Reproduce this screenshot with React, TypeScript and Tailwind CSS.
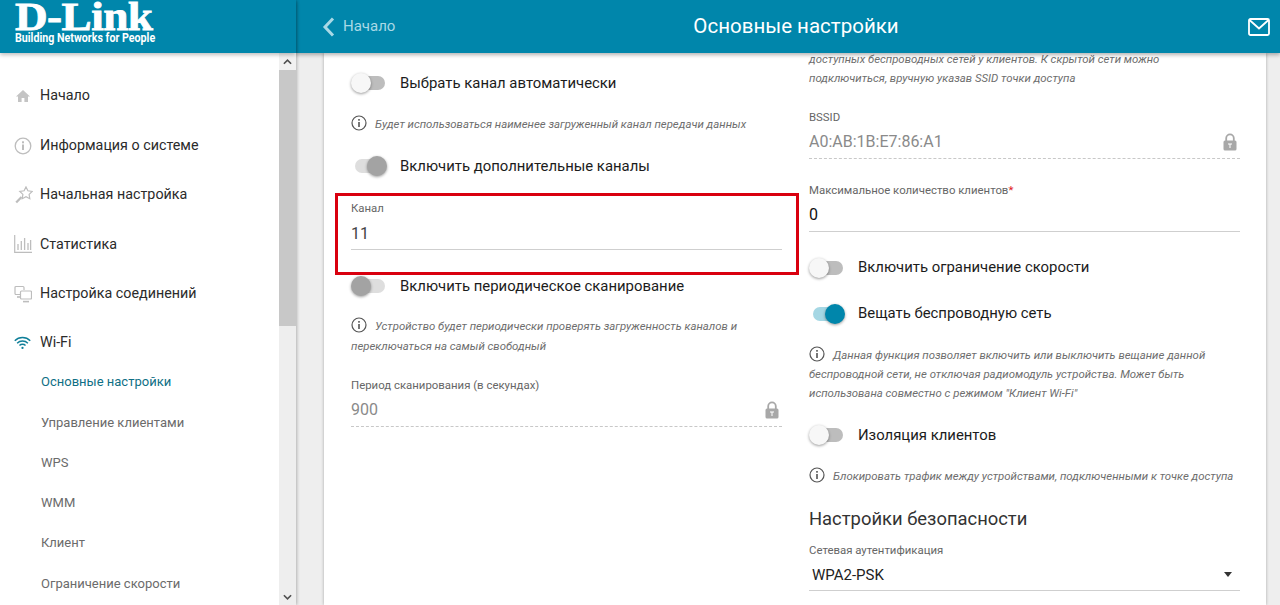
import React from "react";

const Sans = "font-['Roboto',_'Noto_Sans',_sans-serif]";

function Toggle({ state }: { state: "off" | "grayOn" | "grayOff" | "on" }) {
  const track =
    state === "off" ? "bg-[#bdbdbd]" : state === "on" ? "bg-[#a5d7e4]" : "bg-[#dedede]";
  const knob =
    state === "off"
      ? "bg-[#f7f7f7] left-0"
      : state === "on"
        ? "bg-[#0086ab] left-[16px]"
        : state === "grayOn"
          ? "bg-[#a3a3a3] left-[16px]"
          : "bg-[#a3a3a3] left-0";
  return (
    <span className="relative block w-[36px] h-[20px] shrink-0">
      <span className={`absolute left-[4px] top-[3px] w-[30px] h-[14px] rounded-full ${track}`} />
      <span
        className={`absolute top-0 w-[20px] h-[20px] rounded-full shadow-[0_1px_3px_rgba(0,0,0,0.4)] ${knob}`}
      />
    </span>
  );
}

function ToggleRow({ state, label, className = "" }: { state: any; label: string; className?: string }) {
  return (
    <div className={`flex items-center gap-[13px] h-[20px] ${className}`}>
      <Toggle state={state} />
      <span className="text-[14.9px] text-[#1c1c1c] whitespace-nowrap">{label}</span>
    </div>
  );
}

function InfoIcon({ className = "" }: { className?: string }) {
  return (
    <svg viewBox="0 0 16 16" className={`inline-block w-[16px] h-[16px] ${className}`} fill="none">
      <circle cx="8" cy="8" r="7" stroke="#555" strokeWidth="1.2" />
      <rect x="7.2" y="7" width="1.6" height="5" fill="#555" />
      <rect x="7.2" y="4" width="1.6" height="1.7" fill="#555" />
    </svg>
  );
}

function Hint({ children, className = "" }: { children: React.ReactNode; className?: string }) {
  return (
    <p className={`text-[11.4px] leading-[19.3px] italic text-[#6e6e6e] ${className}`}>
      <InfoIcon className="align-[-3px] mr-[8px]" />
      {children}
    </p>
  );
}

function Lock() {
  return (
    <svg viewBox="0 0 14 18" className="w-[14px] h-[18px]">
      <path d="M3.2 8V5.2a3.8 3.8 0 0 1 7.6 0V8" fill="none" stroke="#a8a8a8" strokeWidth="1.8" />
      <rect x="0.5" y="7.5" width="13" height="10" rx="1.5" fill="#a8a8a8" />
      <path d="M5 10.5h4v1H7.5v3.5h-1v-3.5H5z" fill="#fff" />
    </svg>
  );
}

function Field({
  label,
  value,
  star,
  locked,
  valueClass = "text-[#222]",
  line = "border-b border-[#cfcfcf]",
}: {
  label: string;
  value: string;
  star?: boolean;
  locked?: boolean;
  valueClass?: string;
  line?: string;
}) {
  return (
    <div>
      <div className="text-[11.4px] leading-[16px] text-[#666]">
        {label}
        {star && <span className="text-[#e0201a]">*</span>}
      </div>
      <div className={`flex items-center justify-between h-[34px] pt-[2px] pr-[3px] ${line}`}>
        <span className={`text-[16px] ${valueClass}`}>{value}</span>
        {locked && <Lock />}
      </div>
    </div>
  );
}

const stroke = "#bdbdbd";
const icons: Record<string, React.ReactNode> = {
  home: (
    <svg viewBox="0 0 16 16" className="w-[16px] h-[16px] ml-[1px]">
      <path d="M8 2 1 8.5h2V14h3.6v-4h2.8v4H13V8.5h2z" fill="#c4c4c4" />
    </svg>
  ),
  info: (
    <svg viewBox="0 0 18 18" className="w-[18px] h-[18px]" fill="none">
      <circle cx="9" cy="9" r="7.8" stroke={stroke} strokeWidth="1.3" />
      <rect x="8" y="7.5" width="2" height="5.5" fill={stroke} />
      <rect x="8" y="4.3" width="2" height="2" fill={stroke} />
    </svg>
  ),
  wizard: (
    <svg viewBox="0 0 18 18" className="w-[18px] h-[18px] ml-[1px]" fill="none" stroke={stroke} strokeWidth="1.2">
      <path d="M11 .9l1.9 3.9 4.3.6-3.1 3 .7 4.3-3.8-2-3.8 2 .7-4.3-3.1-3 4.3-.6z" />
      <path d="M6.5 11 1.2 16.6" strokeWidth="2.2" />
    </svg>
  ),
  stats: (
    <svg viewBox="0 0 18 18" className="w-[18px] h-[18px]" fill="none" stroke={stroke}>
      <path d="M.7 0v17.3H18" strokeWidth="1.2" />
      <path d="M4 15V9M7.3 15V6M10.6 15V3M14 15V8M16.6 15V5" strokeWidth="1.3" />
    </svg>
  ),
  conn: (
    <svg viewBox="0 0 18 18" className="w-[18px] h-[18px]" fill="none" stroke={stroke} strokeWidth="1.2">
      <path d="M6 9.5H2a1 1 0 0 1-1-1V2.5a1 1 0 0 1 1-1h7a1 1 0 0 1 1 1V5" />
      <rect x="6.5" y="6" width="11" height="8" rx="1" />
      <path d="M9 16.6h6" strokeWidth="1.6" />
      <path d="M3 12h3" strokeWidth="1.6" />
    </svg>
  ),
  wifi: (
    <svg viewBox="0 0 18 14" className="w-[17px] h-[14px]" fill="none" stroke="#0f7f99" strokeWidth="1.5">
      <path d="M.8 4.6a11.6 11.6 0 0 1 16.4 0" />
      <path d="M3.3 7.2a8 8 0 0 1 11.4 0" />
      <path d="M5.8 9.6a4.5 4.5 0 0 1 6.4 0" />
      <circle cx="9" cy="12.2" r="1.2" fill="#0f7f99" stroke="none" />
    </svg>
  ),
};

function MainItem({ icon, label }: { icon: string; label: string }) {
  return (
    <div className="flex items-center h-[49.4px] pl-[14px]">
      <span className="w-[26px] flex justify-start items-center">{icons[icon]}</span>
      <span className="text-[14.3px] text-[#2b2b2b] whitespace-nowrap">{label}</span>
    </div>
  );
}

function SubItem({ label, active }: { label: string; active?: boolean }) {
  return (
    <div className={`h-[40.3px] flex items-center pl-[41px] text-[13px] whitespace-nowrap ${active ? "text-[#0f6f85]" : "text-[#6b6b6b]"}`}>
      {label}
    </div>
  );
}

export default function App() {
  return (
    <div className={`relative flex w-[1280px] h-[605px] overflow-hidden bg-[#eeeeee] ${Sans}`}>
      {/* left column */}
      <aside className="relative z-20 w-[296px] shrink-0 flex flex-col bg-white shadow-[1px_0_3px_rgba(0,0,0,0.25)]">
        <div className="relative z-10 h-[53px] bg-[#0086ab] shadow-[0_2px_4px_rgba(0,0,0,0.25)] pl-[15px] text-white">
          <div className="font-['Liberation_Serif',_serif] font-bold text-[40px] h-[32px] leading-[33px] tracking-[-0.5px] origin-left scale-x-[1.13] whitespace-nowrap [-webkit-text-stroke:0.8px_white]">
            D-Link
          </div>
          <div className="font-['Roboto',_sans-serif] font-bold text-[12px] h-[13px] leading-[13px] origin-left scale-x-[0.89] whitespace-nowrap">
            Building Networks for People
          </div>
        </div>
        <div className="flex-1 flex min-h-0">
          <nav className="flex-1 pt-[18.5px] overflow-hidden">
            <MainItem icon="home" label="Начало" />
            <MainItem icon="info" label="Информация о системе" />
            <MainItem icon="wizard" label="Начальная настройка" />
            <MainItem icon="stats" label="Статистика" />
            <MainItem icon="conn" label="Настройка соединений" />
            <MainItem icon="wifi" label="Wi-Fi" />
            <div className="-mt-[6px]">
              <SubItem label="Основные настройки" active />
              <SubItem label="Управление клиентами" />
              <SubItem label="WPS" />
              <SubItem label="WMM" />
              <SubItem label="Клиент" />
              <SubItem label="Ограничение скорости" />
            </div>
          </nav>
          <div className="w-[17px] shrink-0 bg-[#eeeeee] flex flex-col">
            <div className="h-[17px] flex items-center justify-center bg-[#f1f1f1]">
              <svg viewBox="0 0 10 6" className="w-[9px] h-[6px]" fill="none" stroke="#505050" strokeWidth="1.8">
                <path d="M1 5l4-4 4 4" />
              </svg>
            </div>
            <div className="h-[256px] bg-[#c8c8c8]" />
            <div className="flex-1" />
            <div className="h-[17px] flex items-center justify-center">
              <svg viewBox="0 0 10 6" className="w-[9px] h-[6px]" fill="none" stroke="#505050" strokeWidth="1.8">
                <path d="M1 1l4 4 4-4" />
              </svg>
            </div>
          </div>
        </div>
      </aside>

      {/* right column */}
      <div className="flex-1 min-w-0 flex flex-col">
        <header className="relative z-10 h-[53px] shrink-0 bg-[#0086ab] shadow-[0_2px_4px_rgba(0,0,0,0.3)] grid grid-cols-[1fr_auto_1fr] items-center pl-[26px] pr-[10px]">
          <div className="flex items-center gap-[8px] text-[#a9d9e6]">
            <svg viewBox="0 0 12 20" className="w-[13px] h-[20px]" fill="none" stroke="#a9d9e6" strokeWidth="3">
              <path d="M10.5 1.5 2.5 10l8 8.5" />
            </svg>
            <span className="text-[15px]">Начало</span>
          </div>
          <h1 className="text-[20.5px] text-white font-normal">Основные настройки</h1>
          <svg viewBox="0 0 22 18" className="w-[22px] h-[18px] justify-self-end" fill="none" stroke="#fff" strokeWidth="1.8">
            <rect x="1" y="1" width="20" height="16" rx="1.5" />
            <path d="M1.5 2 11 10.5 20.5 2" />
          </svg>
        </header>
        <main className="flex-1 min-h-0 overflow-hidden pl-[28px] pr-[14px]">
          <div className="h-full bg-white shadow-[0_0_3px_rgba(0,0,0,0.3)] flex gap-[27px] px-[27px] overflow-hidden">
            <section className="w-[431px] shrink-0 pt-[20px]">
              <ToggleRow state="off" label="Выбрать канал автоматически" />
              <Hint className="mt-[22px]">Будет использоваться наименее загруженный канал передачи данных</Hint>
              <ToggleRow state="grayOn" label="Включить дополнительные каналы" className="mt-[22px]" />
              <div className="mt-[24px]">
                <Field label="Канал" value="11" valueClass="text-[#444]" />
              </div>
              <ToggleRow state="grayOff" label="Включить периодическое сканирование" className="mt-[26px]" />
              <Hint className="mt-[21px]">
                Устройство будет периодически проверять загруженность каналов и переключаться на самый свободный
              </Hint>
              <div className="mt-[21px]">
                <Field label="Период сканирования (в секундах)" value="900" locked valueClass="text-[#8a8a8a]" line="border-b border-dashed border-[#c8c8c8]" />
              </div>
            </section>
            <section className="w-[431px] shrink-0 -mt-[3px]">
              <p className="text-[11.4px] leading-[19.3px] italic text-[#6e6e6e]">
                доступных беспроводных сетей у клиентов. К скрытой сети можно подключиться, вручную указав SSID точки доступа
              </p>
              <div className="mt-[20px]">
                <Field label="BSSID" value="A0:AB:1B:E7:86:A1" locked valueClass="text-[#8a8a8a]" line="border-b border-dashed border-[#c8c8c8]" />
              </div>
              <div className="mt-[23px]">
                <Field label="Максимальное количество клиентов" star value="0" valueClass="text-[#111]" />
              </div>
              <ToggleRow state="off" label="Включить ограничение скорости" className="mt-[26px]" />
              <ToggleRow state="on" label="Вещать беспроводную сеть" className="mt-[26px]" />
              <Hint className="mt-[22px]">
                Данная функция позволяет включить или выключить вещание данной беспроводной сети, не отключая радиомодуль устройства. Может быть использована совместно с режимом "Клиент Wi-Fi"
              </Hint>
              <ToggleRow state="off" label="Изоляция клиентов" className="mt-[22px]" />
              <Hint className="mt-[22px]">Блокировать трафик между устройствами, подключенными к точке доступа</Hint>
              <h2 className="text-[18.4px] text-[#333] font-normal mt-[19px] leading-[26px]">Настройки безопасности</h2>
              <div className="mt-[10px]">
                <div className="text-[11.4px] leading-[16px] text-[#666]">Сетевая аутентификация</div>
                <div className="flex items-center justify-between h-[33px] pt-[2px] pl-[3px] pr-[8px] border-b border-[#cfcfcf]">
                  <span className="text-[15px] text-[#222]">WPA2-PSK</span>
                  <span className="w-0 h-0 border-x-[4.5px] border-x-transparent border-t-[5px] border-t-[#333]" />
                </div>
              </div>
            </section>
          </div>
        </main>
      </div>

      {/* red annotation */}
      <div className="absolute z-30 left-[335px] top-[193px] w-[464px] h-[82px] border-[3px] border-[#d9000f] pointer-events-none" />
    </div>
  );
}
